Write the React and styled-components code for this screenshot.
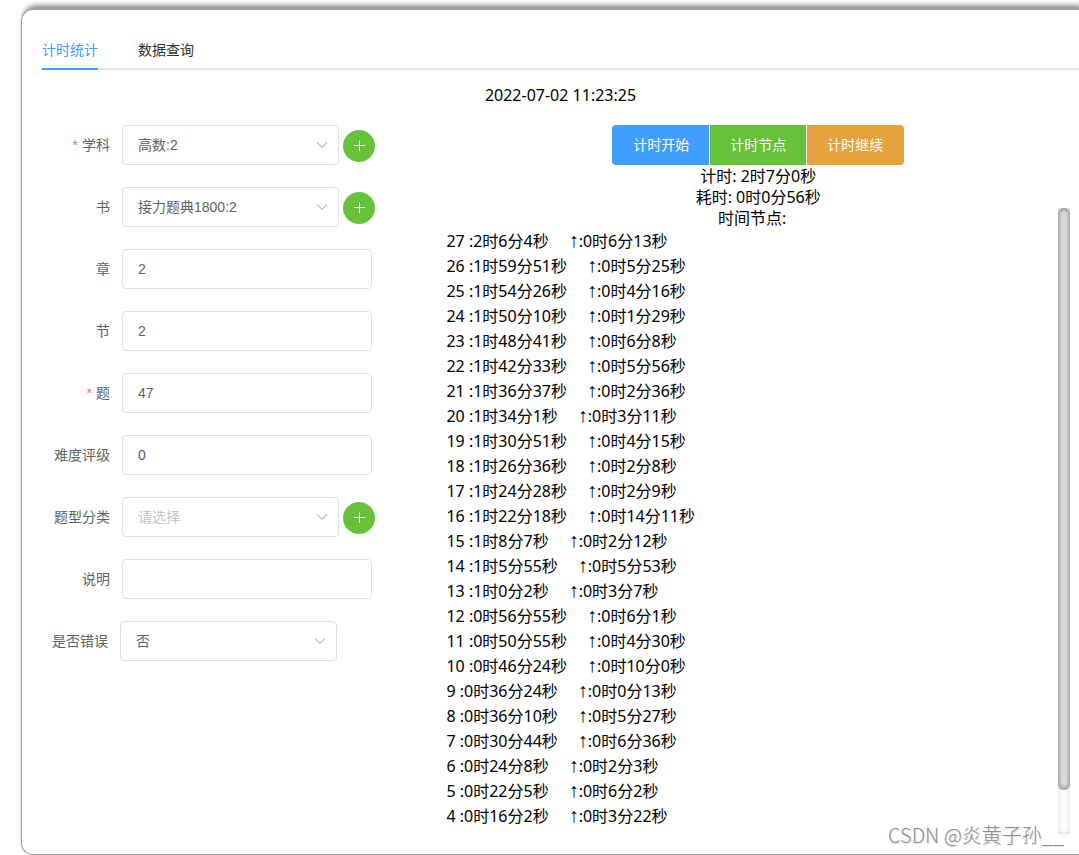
import React from "react";
import styled, { createGlobalStyle, css } from "styled-components";

const GlobalStyle = createGlobalStyle`
  *, *::before, *::after { box-sizing: border-box; }
  body {
    margin: 0;
    background: #fff;
    color: #000;
    font-family: "Noto Sans", "Noto Sans CJK SC", sans-serif;
    font-size: 16px;
  }
  button, input, select { font: inherit; margin: 0; }
`;

const formFont = css`
  font-family: "Liberation Sans", "Noto Sans CJK SC", sans-serif;
  font-size: 14px;
`;

const Page = styled.div`
  position: relative;
  padding: 9px 0 0 21px;
  overflow: hidden;
`;

const Card = styled.main`
  min-height: calc(100vh - 9px);
  padding: 20px 0 20px 20px;
  border: 1px solid #a0a0a0;
  border-right: 0;
  border-radius: 12px 0 0 12px;
  box-shadow: 3px -4px 5px #909090, 0 0 4px rgba(0, 0, 0, 0.12);
  background: #fff;
`;

const Tabs = styled.nav`
  ${formFont}
  display: flex;
  gap: 40px;
  border-bottom: 2px solid #e4e7ed;
`;

const Tab = styled.button`
  height: 40px;
  margin-bottom: -2px;
  padding: 2px 0 0;
  border: 0;
  border-bottom: 2px solid ${(p) => (p.$active ? "#409eff" : "transparent")};
  background: none;
  color: ${(p) => (p.$active ? "#409eff" : "#303133")};
  line-height: 36px;
  cursor: pointer;
`;

const Clock = styled.time`
  display: block;
  padding: 15px 0 19px;
  line-height: 21px;
  text-align: center;
`;

const Columns = styled.div`
  display: flex;
  align-items: flex-start;
`;

const Form = styled.form`
  ${formFont}
  flex: 0 0 39%;
  display: flex;
  flex-direction: column;
  gap: 22px;
  color: #606266;
`;

const Field = styled.div`
  display: flex;
  align-items: center;
`;

const Label = styled.label`
  width: ${(p) => (p.$narrow ? 78 : 80)}px;
  padding-right: 12px;
  text-align: right;
  line-height: 40px;
  white-space: nowrap;
`;

const Required = styled.span`
  margin-right: 4px;
  color: #f56c6c;
`;

const control = css`
  height: 40px;
  padding: 0 15px;
  border: 1px solid #dcdfe6;
  border-radius: 4px;
  background: #fff;
  color: #606266;
  outline: none;
`;

const TextInput = styled.input`
  ${control}
  width: 250px;
`;

const SelectBox = styled.span`
  display: grid;
  width: 217px;
  align-items: center;
`;

const Select = styled.select`
  ${control}
  grid-area: 1 / 1;
  width: 100%;
  appearance: none;
  color: ${(p) => (p.$empty ? "#c0c4cc" : "#606266")};
`;

const Chevron = styled.svg`
  grid-area: 1 / 1;
  justify-self: end;
  margin-right: 11px;
  pointer-events: none;
`;

const AddButton = styled.button`
  display: grid;
  place-items: center;
  width: 32px;
  height: 32px;
  margin: 2px 0 0 4px;
  padding: 0;
  border: 0;
  border-radius: 50%;
  background: #67c23a;
  cursor: pointer;
`;

const Timer = styled.section`
  flex: 1;
  min-width: 0;
  margin-right: 9px;
  line-height: 21px;
  text-align: center;
`;

const ButtonGroup = styled.div`
  display: flex;
  justify-content: center;
  gap: 1px;
  margin-bottom: 1px;
`;

const ActionButton = styled.button`
  ${formFont}
  height: 40px;
  padding: 0 20px;
  border: 1px solid ${(p) => p.$color};
  border-width: 1px 0;
  background: ${(p) => p.$color};
  color: #fff;
  cursor: pointer;
  &:first-child { border-radius: 4px 0 0 4px; padding-left: 21px; }
  &:last-child { border-radius: 0 4px 4px 0; padding-right: 21px; }
`;

const Line = styled.p`
  margin: 0;
`;

const Scroller = styled.div`
  display: flex;
  height: calc(100vh - 229px);
  min-height: 626px;
`;

const ScrollContent = styled.div`
  flex: 1;
`;

const Track = styled.div`
  width: 12px;
  background: #fcfcfc;
  box-shadow: inset 0 0 5px rgba(0, 0, 0, 0.15);
`;

const Thumb = styled.div`
  height: 93%;
  border-radius: 6px;
  background: #d8d8d8;
  box-shadow: inset 0 0 5px rgba(0, 0, 0, 0.5);
`;

const NodeList = styled.ul`
  margin: 0;
  padding: 0;
  list-style: none;
  text-align: left;
  line-height: 25px;
`;

const Node = styled.li`
  display: flex;
  gap: 20px;
  height: 25px;
`;

const Arrow = styled.span`
  font-family: "Liberation Sans", sans-serif;
  font-size: 20px;
  line-height: 0;
`;

const Watermark = styled.div`
  position: absolute;
  right: 15px;
  bottom: 8px;
  color: #8c8c8c;
  font-family: "Noto Sans CJK SC", sans-serif;
  font-weight: 300;
  font-size: 20px;
  line-height: 24px;
  text-shadow: 1px 1px 0 #e6e6e6;
`;

const fields = [
  { id: "subject", label: "学科", value: "高数:2", type: "select", required: true, add: true },
  { id: "book", label: "书", value: "接力题典1800:2", type: "select", add: true },
  { id: "chapter", label: "章", value: "2" },
  { id: "section", label: "节", value: "2" },
  { id: "question", label: "题", value: "47", required: true },
  { id: "difficulty", label: "难度评级", value: "0" },
  { id: "category", label: "题型分类", value: "请选择", type: "select", empty: true, add: true },
  { id: "note", label: "说明", value: "" },
  { id: "wrong", label: "是否错误", value: "否", type: "select", narrow: true },
];

const nodes = [
  [27, "2时6分4秒", "0时6分13秒"],
  [26, "1时59分51秒", "0时5分25秒"],
  [25, "1时54分26秒", "0时4分16秒"],
  [24, "1时50分10秒", "0时1分29秒"],
  [23, "1时48分41秒", "0时6分8秒"],
  [22, "1时42分33秒", "0时5分56秒"],
  [21, "1时36分37秒", "0时2分36秒"],
  [20, "1时34分1秒", "0时3分11秒"],
  [19, "1时30分51秒", "0时4分15秒"],
  [18, "1时26分36秒", "0时2分8秒"],
  [17, "1时24分28秒", "0时2分9秒"],
  [16, "1时22分18秒", "0时14分11秒"],
  [15, "1时8分7秒", "0时2分12秒"],
  [14, "1时5分55秒", "0时5分53秒"],
  [13, "1时0分2秒", "0时3分7秒"],
  [12, "0时56分55秒", "0时6分1秒"],
  [11, "0时50分55秒", "0时4分30秒"],
  [10, "0时46分24秒", "0时10分0秒"],
  [9, "0时36分24秒", "0时0分13秒"],
  [8, "0时36分10秒", "0时5分27秒"],
  [7, "0时30分44秒", "0时6分36秒"],
  [6, "0时24分8秒", "0时2分3秒"],
  [5, "0时22分5秒", "0时6分2秒"],
  [4, "0时16分2秒", "0时3分22秒"],
];

function FormField({ id, label, value, type, required, add, empty, narrow }) {
  return (
    <Field>
      <Label htmlFor={id} $narrow={narrow}>
        {required && <Required>*</Required>}
        {label}
      </Label>
      {type === "select" ? (
        <SelectBox>
          <Select id={id} $empty={empty} defaultValue={value}>
            <option>{value}</option>
          </Select>
          <Chevron width="12" height="12" viewBox="0 0 12 12" fill="none" stroke="#c0c4cc" strokeWidth="1.3" aria-hidden="true">
            <path d="M0.8 3.3 6 8.3 11.2 3.3" />
          </Chevron>
        </SelectBox>
      ) : (
        <TextInput id={id} defaultValue={value} />
      )}
      {add && (
        <AddButton type="button" aria-label={`添加${label}`}>
          <svg width="12" height="12" viewBox="0 0 12 12" stroke="#fff" aria-hidden="true">
            <path d="M1 5.5H12M6.5 0.5V11" />
          </svg>
        </AddButton>
      )}
    </Field>
  );
}

export default function App() {
  return (
    <Page>
      <GlobalStyle />
      <Card>
        <Tabs>
          <Tab type="button" $active>计时统计</Tab>
          <Tab type="button">数据查询</Tab>
        </Tabs>
        <Clock>2022-07-02 11:23:25</Clock>
        <Columns>
          <Form>
            {fields.map((f) => (
              <FormField key={f.id} {...f} />
            ))}
          </Form>
          <Timer>
            <ButtonGroup>
              <ActionButton type="button" $color="#409eff">计时开始</ActionButton>
              <ActionButton type="button" $color="#67c23a">计时节点</ActionButton>
              <ActionButton type="button" $color="#e6a23c">计时继续</ActionButton>
            </ButtonGroup>
            <Line>计时: 2时7分0秒</Line>
            <Line>耗时: 0时0分56秒</Line>
            <Scroller>
              <ScrollContent>
                <Line>时间节点:</Line>
                <NodeList>
                  {nodes.map(([n, at, diff]) => (
                    <Node key={n}>
                      <span>{n} :{at}</span>
                      <span><Arrow>↑</Arrow>:{diff}</span>
                    </Node>
                  ))}
                </NodeList>
              </ScrollContent>
              <Track aria-hidden="true">
                <Thumb />
              </Track>
            </Scroller>
          </Timer>
        </Columns>
      </Card>
      <Watermark>CSDN @炎黄子孙__</Watermark>
    </Page>
  );
}
